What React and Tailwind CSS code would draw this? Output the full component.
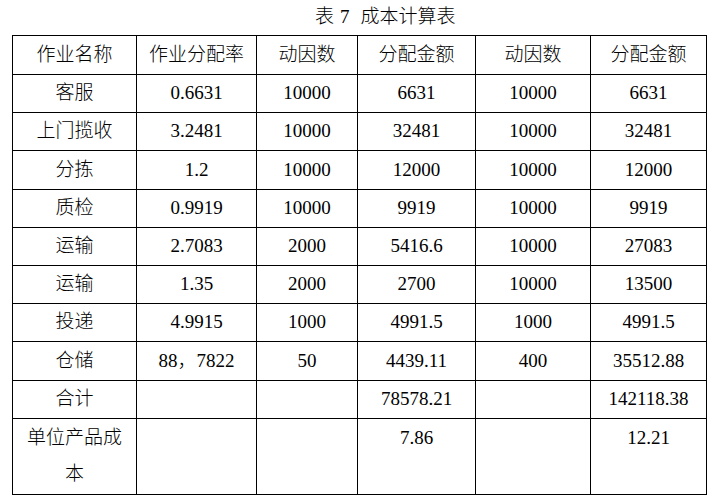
const rows = [
  { h: "h-[38px]", cells: ["客服", "0.6631", "10000", "6631", "10000", "6631"] },
  { h: "h-[38px]", cells: ["上门揽收", "3.2481", "10000", "32481", "10000", "32481"] },
  { h: "h-[39px]", cells: ["分拣", "1.2", "10000", "12000", "10000", "12000"] },
  { h: "h-[38px]", cells: ["质检", "0.9919", "10000", "9919", "10000", "9919"] },
  { h: "h-[38px]", cells: ["运输", "2.7083", "2000", "5416.6", "10000", "27083"] },
  { h: "h-[38px]", cells: ["运输", "1.35", "2000", "2700", "10000", "13500"] },
  { h: "h-[38px]", cells: ["投递", "4.9915", "1000", "4991.5", "1000", "4991.5"] },
  { h: "h-[39px]", cells: ["仓储", "88，7822", "50", "4439.11", "400", "35512.88"] },
  { h: "h-[38px]", cells: ["合计", "", "", "78578.21", "", "142118.38"] },
];

const head = ["作业名称", "作业分配率", "动因数", "分配金额", "动因数", "分配金额"];

export default function App() {
  return (
    <div className="w-[712px] h-[497px] bg-white text-black text-[19px] font-light font-['Liberation_Serif','Noto_Sans_CJK_SC',serif]">
      {/* 标题 */}
      <div className="h-[35px] flex items-center pl-[315px]">
        <span>表</span>
        <span className="ml-[6px]">7</span>
        <span className="ml-[11px]">成本计算表</span>
      </div>

      <table className="ml-[12px] w-[694px] table-fixed border-collapse text-center">
        <colgroup>
          <col className="w-[124px]" />
          <col className="w-[120px]" />
          <col className="w-[101px]" />
          <col className="w-[118px]" />
          <col className="w-[115px]" />
          <col className="w-[116px]" />
        </colgroup>
        <tbody>
          <tr className="h-[39px]">
            {head.map((t, i) => (
              <td key={i} className="border border-black p-0 align-middle">{t}</td>
            ))}
          </tr>
          {rows.map((r, i) => (
            <tr key={i} className={r.h}>
              {r.cells.map((c, j) => (
                <td key={j} className="border border-black p-0 align-middle">{c}</td>
              ))}
            </tr>
          ))}
          <tr className="h-[76px] leading-[36px]">
            <td className="border border-black px-[6px] pt-[1px] align-top">单位产品成本</td>
            <td className="border border-black p-0"></td>
            <td className="border border-black p-0"></td>
            <td className="border border-black p-0 pt-[1px] align-top">7.86</td>
            <td className="border border-black p-0"></td>
            <td className="border border-black p-0 pt-[1px] align-top">12.21</td>
          </tr>
        </tbody>
      </table>
    </div>
  );
}
